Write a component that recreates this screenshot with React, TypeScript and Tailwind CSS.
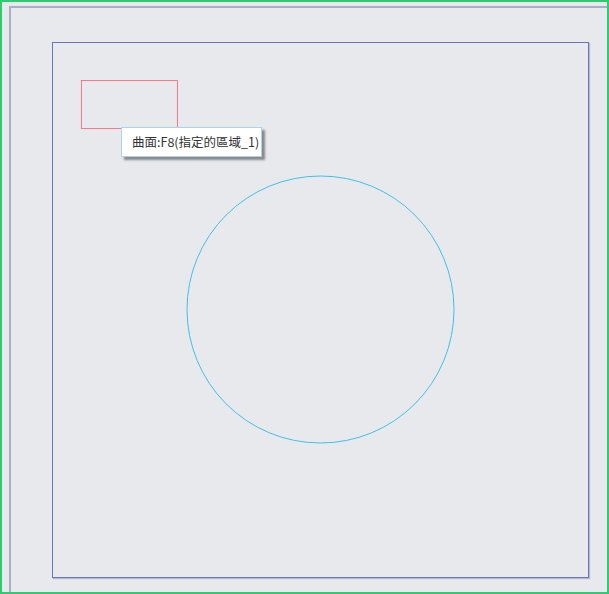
export default function App() {
  return (
    <div className="relative w-[609px] h-[594px] overflow-hidden bg-[#e8e9ed] border-2 border-[#2ecc71]">
      {/* outer viewport frame (extends past right/bottom edge) */}
      <div className="absolute left-[7px] top-[4px] w-[640px] h-[640px] border-t-2 border-l-2 border-[#a7b0c6]" />

      {/* boundary */}
      <div className="absolute left-[50px] top-[40px] w-[537px] h-[536px] border border-[#6577bd] shadow-[1px_1px_1px_rgba(90,100,140,0.35)]" />

      {/* selected region */}
      <div className="absolute left-[79px] top-[78px] w-[97px] h-[49px] border border-[#ff7589]" />

      {/* circle */}
      <svg className="absolute left-0 top-0" width="609" height="594">
        <circle cx="318.5" cy="307.5" r="133.5" fill="none" stroke="#3ec0ee" strokeWidth="1" />
      </svg>

      {/* tooltip */}
      <div
        className="absolute left-[119px] top-[125px] w-[141px] h-[30px] flex items-center pl-[10px] bg-white border border-[#a9d4ea] shadow-[3px_3px_2px_rgba(60,60,60,0.55)] text-[12.5px] text-[#333]"
        style={{ fontFamily: '"Noto Sans CJK TC", "Noto Sans", sans-serif' }}
      >
        曲面:F8(指定的區域_1)
      </div>
    </div>
  );
}
